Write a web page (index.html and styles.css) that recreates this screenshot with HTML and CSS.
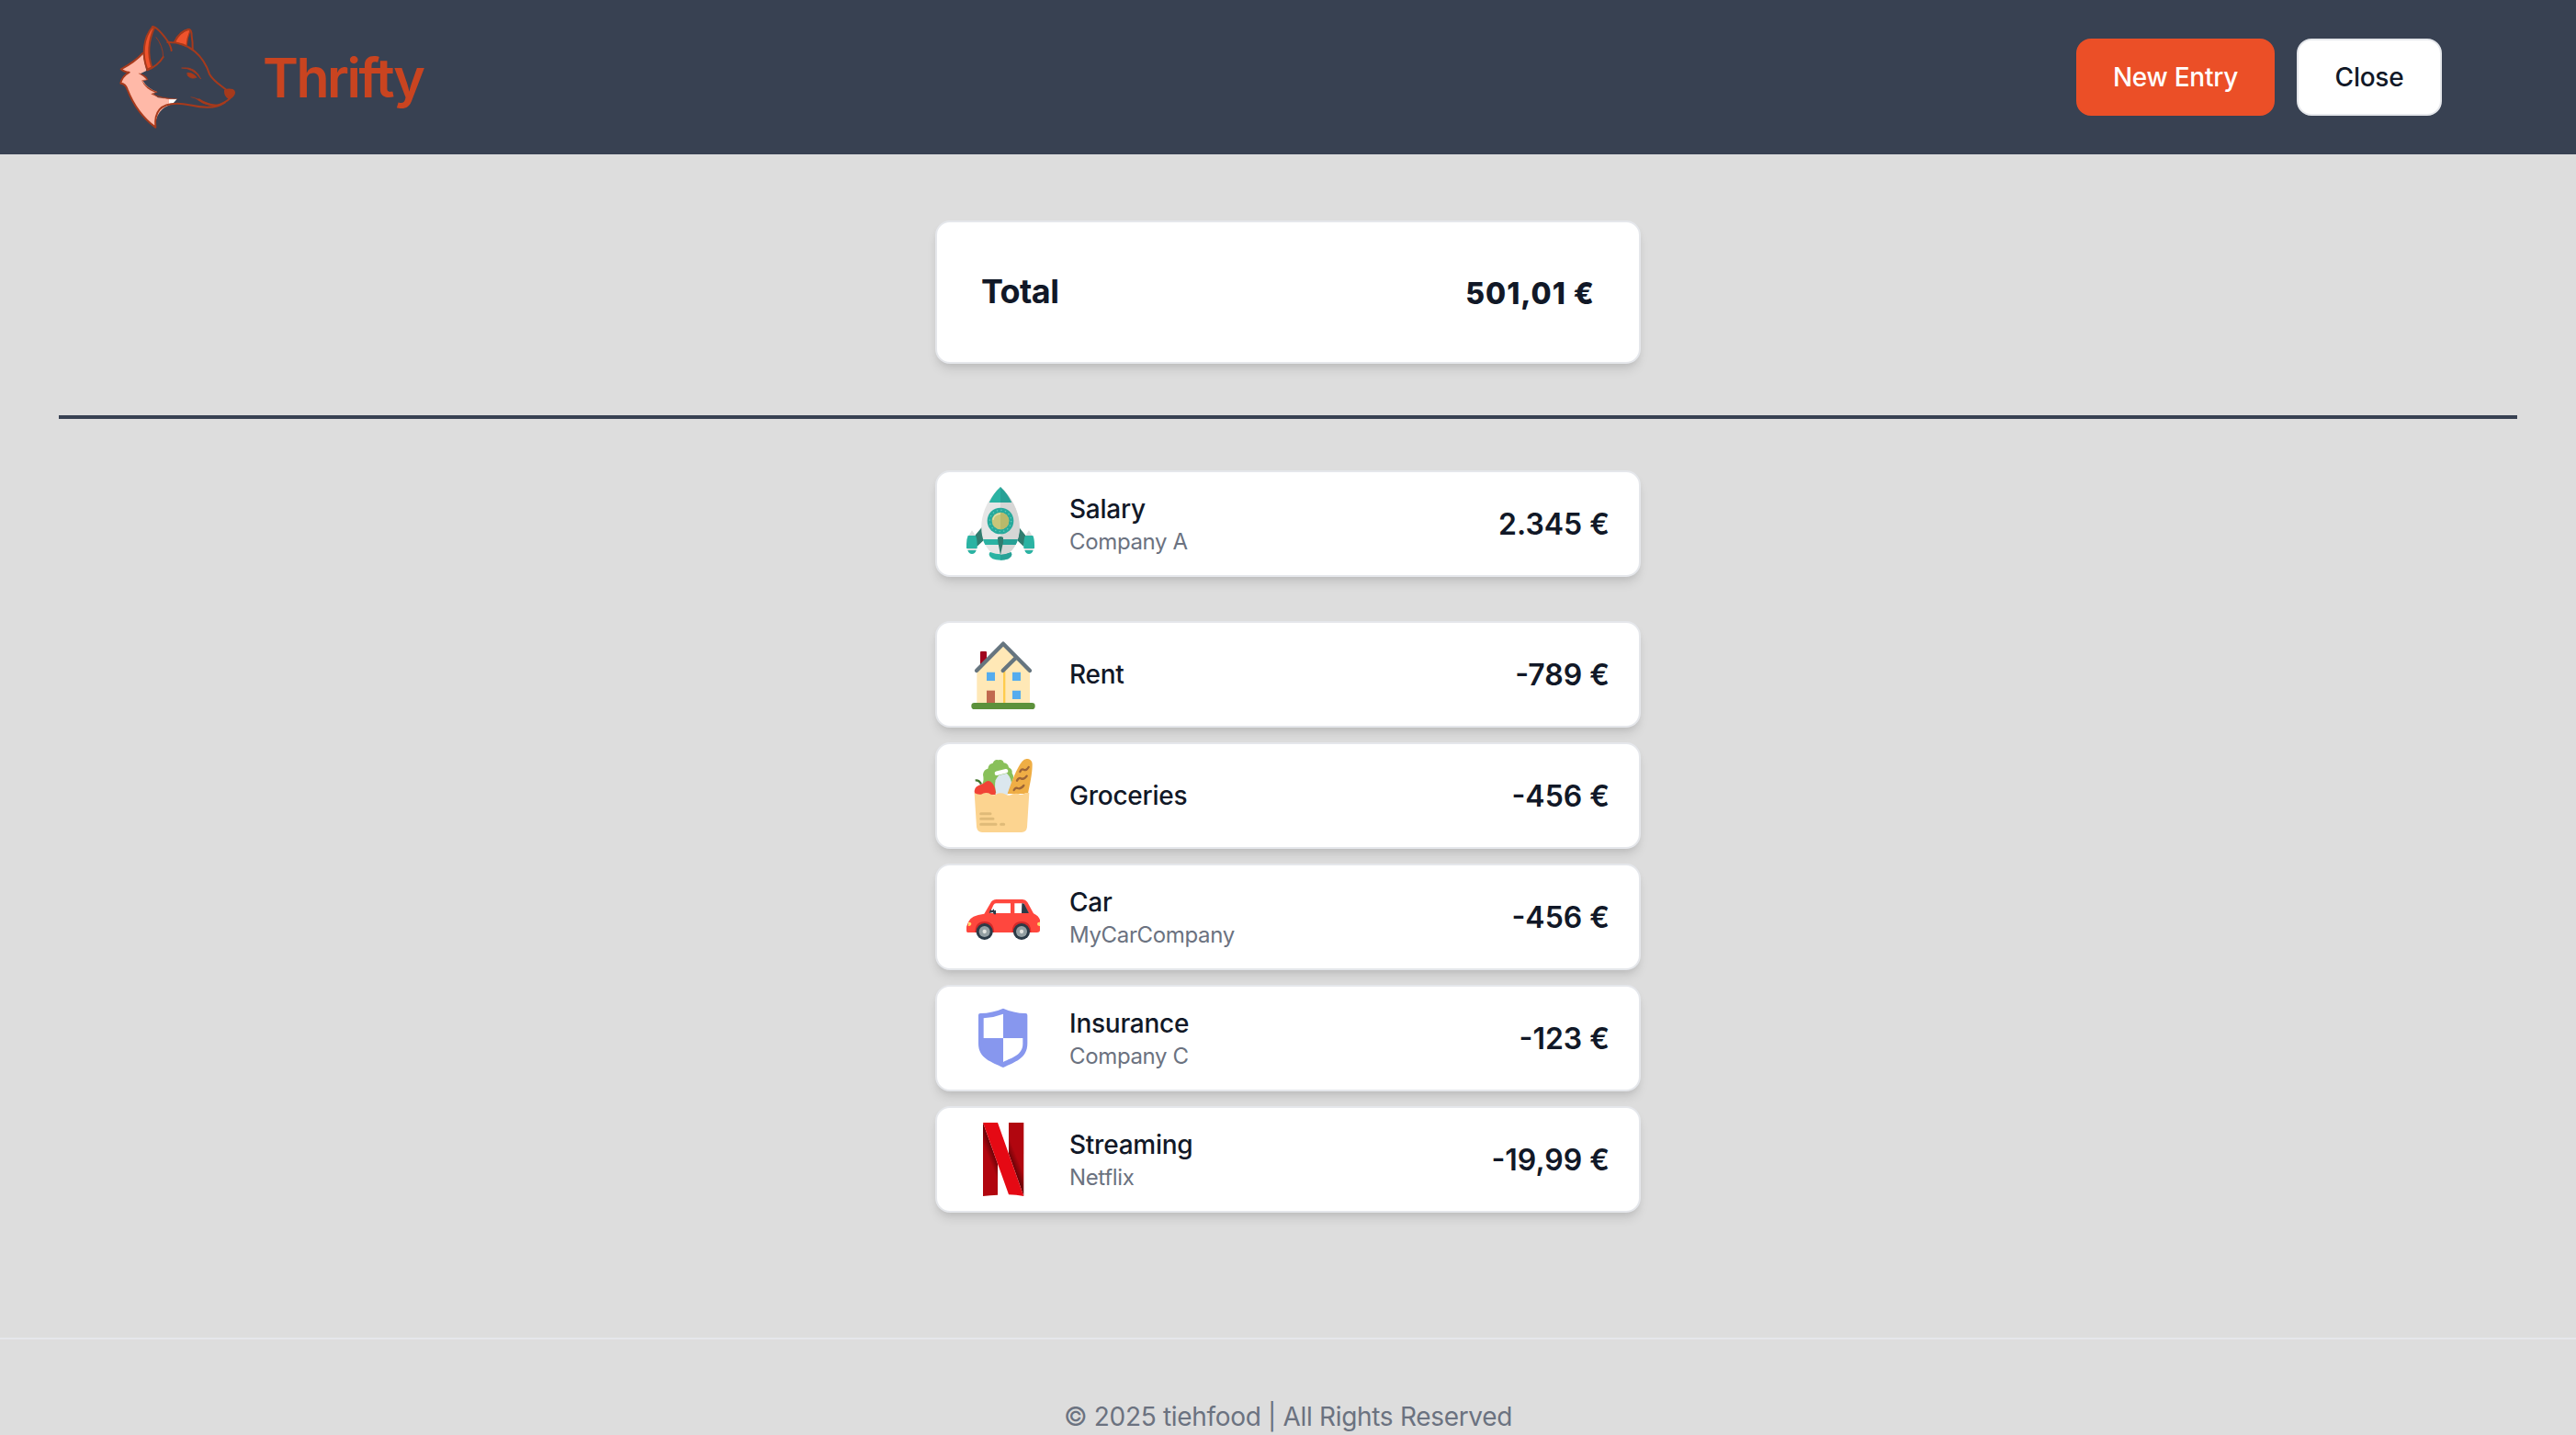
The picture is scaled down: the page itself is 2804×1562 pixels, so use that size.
FILE: index.html
```html
<!DOCTYPE html>
<html lang="en">
<head>
<meta charset="utf-8">
<title>Thrifty</title>
<link rel="stylesheet" href="styles.css">
</head>
<body>
<header class="header">
  <a class="brand">
    <svg class="brand-logo" viewBox="54 48 384 348" fill="none" stroke="#a73a1c" stroke-width="6" stroke-linecap="round" stroke-linejoin="round">
      <path d="M136 144Q112 171 65 196Q76 206 92 206Q68 220 64 242Q80 243 86 262Q116 340 178 386Q176 326 234 309L236 293L186 289L170 276L183 270Q150 258 137 234L152 230L128 211L148 201Z" fill="#ffb9a8" stroke="none"/>
      <path d="M222 294L248 293L234 309L222 310Z" fill="#fff" stroke="none"/>
      <path d="M136 144Q112 171 65 196Q76 206 92 206Q68 220 64 242Q80 243 86 262Q116 340 178 386Q170 308 246 308C285 307 300 320 345 320Q380 321 405 304"/>
      <path d="M124 210Q146 213 153 230L134 234Q148 258 184 271L168 276Q190 290 248 293Q200 296 164 277L178 272Q144 260 134 233L150 230Q140 218 124 210Z" fill="#a73a1c" stroke-width="1"/>
      <path d="M151 197C132 150 138 92 168 58L174 60C154 105 152 150 166 190Z" fill="#f0532c"/>
      <path d="M168 57Q184 58 216 102Q228 120 230 135M151 199Q186 185 203 156"/>
      <path d="M203 156Q202 118 180 92" stroke-width="2.5"/>
      <path d="M240 107Q258 75 284 66Q292 64 291 70Q281 95 279 121Z" fill="#f0532c" stroke-width="4"/>
      <path d="M240 107Q258 70 286 66Q296 66 296 88Q300 108 299 132"/>
      <path d="M217 108C290 106 336 155 354 212C366 234 390 248 410 264"/>
      <path d="M405 266Q415 260 430 264Q437 268 434 277Q428 289 418 291Q404 283 405 266Z" fill="#a73a1c"/>
      <path d="M421 291Q404 308 375 315Q340 310 320 295"/>
      <path d="M294 287C325 290 340 311 378 312Q344 318 320 299Q310 290 294 287Z" fill="#a73a1c" stroke-width="1"/>
      <path d="M264 192Q308 185 326 228Q300 192 264 192Z" fill="#a73a1c" stroke-width="2"/>
      <path d="M282 208Q300 206 312 223Q292 230 283 217Z" fill="#a73a1c" stroke-width="2"/>
    </svg>
    <span class="brand-name">Thrifty</span>
  </a>
  <nav class="actions">
    <button class="btn btn-primary">New Entry</button>
    <button class="btn btn-light">Close</button>
  </nav>
</header>

<main class="main">
  <section class="card total">
    <span class="total-label">Total</span>
    <span class="total-value">501,01 €</span>
  </section>

  <hr class="divider">

  <section class="group">
    <article class="card entry">
      <svg class="entry-icon" viewBox="126 90 240 240">
        <path d="M200 308Q200 302 208 302H266Q274 302 274 312Q270 329 237 329Q204 329 200 312Z" fill="#2bb3a3"/>
        <path d="M237 302H266Q274 302 274 312Q270 329 237 329Z" fill="#27a196"/>
        <path d="M178 220L154 248L160 285L185 262ZM296 220L319 248L313 285L289 262Z" fill="#317c6f"/>
        <path d="M237 90C160 160 160 260 206 304Q237 316 268 304C314 260 314 160 237 90Z" fill="#e6e6e6"/>
        <path d="M237 90C314 160 314 260 268 304Q253 311 237 311Z" fill="#d6d6d5"/>
        <path d="M237 90Q215 110 200 141H237ZM180 261H237V279H187Q182 271 180 261Z" fill="#2bb3a3"/>
        <path d="M237 90Q259 110 274 141H237ZM294 261H237V279H287Q292 271 294 261Z" fill="#27a196"/>
        <circle cx="237" cy="201" r="43" fill="#27aa9c"/>
        <circle cx="237" cy="201" r="35" fill="none" stroke="#63c8bd" stroke-width="4" stroke-dasharray="4 9.75"/>
        <circle cx="237" cy="201" r="28" fill="#c8c67a"/>
        <path d="M237 173A28 28 0 0 1 237 229Z" fill="#b8b96b"/>
        <path d="M213 198Q215 179 237 177" fill="none" stroke="#e0dfaa" stroke-width="4"/>
        <path d="M228 255Q237 249 246 255V270L237 313L229 270Z" fill="#317c6f"/>
        <path d="M133 250L144 232L156 250ZM318 250L330 232L341 250ZM128 290H160L154 303H134ZM314 290H346L340 303H320Z" fill="#dfdfdf"/>
        <path d="M131 249H156Q162 260 161 291H126Q125 262 131 249ZM318 249H343Q349 260 348 291H313Q312 262 318 249ZM130 297H158Q154 309 144 309Q134 309 130 297ZM316 297H344Q340 309 330 309Q320 309 316 297Z" fill="#2bb3a3"/>
      </svg>
      <div class="entry-text"><span class="entry-title">Salary</span><span class="entry-note">Company A</span></div>
      <span class="entry-amount">2.345 €</span>
    </article>
  </section>

  <section class="group">
    <article class="card entry">
      <svg class="entry-icon" viewBox="126 72 240 240">
        <rect x="171" y="117" width="21" height="45" rx="3" fill="#a0041e"/>
        <path d="M160 180L246 94L333 180V286H160Z" fill="#ffe8b6"/>
        <path d="M246 178H253V286H246Z" fill="#ffcc4d"/>
        <path d="M192 185H219V213H192ZM276 185H303V213H276ZM276 245H303V273H276Z" fill="#55acee"/>
        <path d="M192 245H219V287H192Z" fill="#c1694f"/>
        <path d="M159 180L246 92L333 180M288 137L245 180" fill="none" stroke="#66757f" stroke-width="13" stroke-linecap="round" stroke-linejoin="round"/>
        <rect x="142" y="285" width="208" height="21" rx="10" fill="#5c913b"/>
      </svg>
      <div class="entry-text"><span class="entry-title">Rent</span></div>
      <span class="entry-amount">-789 €</span>
    </article>
    <article class="card entry">
      <svg class="entry-icon" viewBox="126 78 240 240">
        <path d="M184 190L178 160Q184 148 180 130Q182 112 196 110Q198 94 212 92Q218 78 230 82Q244 78 248 91Q262 92 264 106Q277 112 275 125Q283 134 276 150L262 190Z" fill="#89c05a"/>
        <path d="M232 132L258 125Q276 144 272 165L260 195H224Q216 165 221 148Q225 138 232 132Z" fill="#dbe7ee"/>
        <path d="M225 125L255 118" stroke="#fff" stroke-width="14" stroke-linecap="round"/>
        <path d="M260 192C274 150 290 108 308 86Q318 75 330 79Q341 84 341 96C341 130 333 160 327 192Z" fill="#efae45"/>
        <path d="M301 120Q307 109 313 113Q321 118 329 105M291 149Q297 138 304 142Q314 147 323 134M281 180Q287 170 293 174Q303 178 313 165" fill="none" stroke="#9d6537" stroke-width="7" stroke-linecap="round"/>
        <path d="M155 148Q169 147 174 161" fill="none" stroke="#43752c" stroke-width="7"/>
        <path d="M153 192Q148 171 167 164Q181 161 190 152Q202 146 211 158Q223 173 221 195H153Z" fill="#f14336"/>
        <path d="M152 189Q162 196 174 194Q185 186 198 190Q210 199 222 194Q237 186 254 194Q266 201 277 193Q290 188 302 195Q314 195 318 189H331L324 301Q322 318 306 318H177Q162 318 159 301Z" fill="#fcd490"/>
        <path d="M173 257H204M173 274H213M173 292H222M239 292H248" stroke="#dfba78" stroke-width="9" stroke-linecap="round"/>
      </svg>
      <div class="entry-text"><span class="entry-title">Groceries</span></div>
      <span class="entry-amount">-456 €</span>
    </article>
    <article class="card entry">
      <svg class="entry-icon" viewBox="126 84 240 240">
        <path fill="#ff473e" fill-rule="evenodd" d="M184 194L205 158Q211 147 224 147H309Q319 147 325 156L345 193Q362 201 366 214V247Q366 255 356 255H130Q126 255 126 250V236L133 219Q140 200 184 194ZM202 192H270V160H222Q217 160 214 166ZM283 192H329L316 164Q314 160 309 160H283Z"/>
        <path d="M307 160H310Q315 160 317 166L330 192H306ZM200 192L204 180L210 184L215 178L217 184L222 182V196H216L212 189Z" fill="#2b3b47"/>
        <path d="M132 221Q142 220 142 228Q140 235 132 234ZM366 221Q357 220 357 228Q358 235 366 234Z" fill="#ffdb6e"/>
        <path d="M154 255Q154 219 185 219Q216 219 216 255ZM275 255Q275 219 306 219Q337 219 337 255Z" fill="#d32a2a"/>
        <g fill="#2b3b47"><circle cx="185" cy="252" r="27"/><circle cx="306" cy="252" r="27"/></g>
        <g fill="#94a0a3"><circle cx="185" cy="252" r="18"/><circle cx="306" cy="252" r="18"/></g>
        <g fill="#e2e4e0"><circle cx="185" cy="252" r="6.500"/><circle cx="306" cy="252" r="6.500"/></g>
      </svg>
      <div class="entry-text"><span class="entry-title">Car</span><span class="entry-note">MyCarCompany</span></div>
      <span class="entry-amount">-456 €</span>
    </article>
    <article class="card entry">
      <svg class="entry-icon" viewBox="126 75 240 240">
        <path fill="#8797ee" fill-rule="evenodd" d="M246 98Q279 113 319 114Q325 114 325 120V212C325 262 284 272 246 291C208 272 165 262 165 212V120Q165 114 171 114Q212 113 246 98ZM246 116Q215 128 182 130V195H246ZM246 195V273C276 258 310 250 310 213V195Z"/>
      </svg>
      <div class="entry-text"><span class="entry-title">Insurance</span><span class="entry-note">Company C</span></div>
      <span class="entry-amount">-123 €</span>
    </article>
    <article class="card entry">
      <svg class="entry-icon" viewBox="126 81 240 240">
        <defs>
          <linearGradient id="foldLeft" gradientUnits="userSpaceOnUse" x1="206" y1="158" x2="186" y2="166">
            <stop offset="0" stop-color="#6d0207"/><stop offset="1" stop-color="#b1060f"/>
          </linearGradient>
          <linearGradient id="foldRight" gradientUnits="userSpaceOnUse" x1="284" y1="234" x2="304" y2="226">
            <stop offset="0" stop-color="#6d0207"/><stop offset="1" stop-color="#b1060f"/>
          </linearGradient>
        </defs>
        <path d="M180 81L228 215V317Q204 318 180 321Z" fill="url(#foldLeft)"/>
        <path d="M264 81H313V321L264 183Z" fill="url(#foldRight)"/>
        <path d="M180 81H228L313 321Q289 317 264 316Z" fill="#e50914"/>
      </svg>
      <div class="entry-text"><span class="entry-title">Streaming</span><span class="entry-note">Netflix</span></div>
      <span class="entry-amount">-19,99 €</span>
    </article>
  </section>
</main>

<footer class="footer">© 2025 tiehfood | All Rights Reserved</footer>
</body>
</html>
```
FILE: styles.css
```css
* {
  box-sizing: border-box;
}

body {
  margin: 0;
  height: 1562px;
  overflow: hidden;
  background: #dddddd;
  color: #111827;
  font-family: Inter, "Liberation Sans", sans-serif;
}

.header {
  display: flex;
  align-items: center;
  justify-content: space-between;
  height: 168px;
  padding: 0 146px 0 128px;
  background: #384152;
}

.brand {
  display: flex;
  align-items: center;
  gap: 30px;
}

.brand-logo {
  width: 128px;
  height: 116px;
}

.brand-name {
  padding-top: 2px;
  color: #c94420;
  font-size: 59px;
  font-weight: 600;
  letter-spacing: -2.5px;
  line-height: 72px;
}

.actions {
  display: flex;
  gap: 24px;
}

.btn {
  height: 84px;
  padding: 0;
  border: 2px solid #e5e7eb;
  border-radius: 16px;
  font-family: inherit;
  font-size: 28px;
  font-weight: 500;
  letter-spacing: -0.25px;
  line-height: 40px;
}

.btn-primary {
  width: 216px;
  border-color: #eb4f27;
  background: #eb4f27;
  color: #fff;
}

.btn-light {
  width: 158px;
  background: #fff;
  color: #111827;
}

.main {
  display: flex;
  flex-direction: column;
  align-items: center;
  padding: 72px 64px 136px;
}

.card {
  display: flex;
  align-items: center;
  width: 768px;
  border: 2px solid #e5e7eb;
  border-radius: 16px;
  background: #fff;
  box-shadow: 0 8px 12px -2px rgb(0 0 0 / 10%), 0 4px 8px -4px rgb(0 0 0 / 10%);
}

.total {
  justify-content: space-between;
  height: 156px;
  padding: 0 48px;
}

.total-label {
  padding-bottom: 2px;
  font-size: 36px;
  font-weight: 700;
  letter-spacing: -0.6px;
}

.total-value {
  padding-top: 2px;
  font-size: 32px;
  font-weight: 800;
  letter-spacing: 1px;
}

.divider {
  align-self: stretch;
  height: 4px;
  margin: 56px 0;
  border: 0;
  background: #384152;
}

.group {
  display: flex;
  flex-direction: column;
  gap: 16px;
}

.group + .group {
  margin-top: 48px;
}

.entry {
  height: 116px;
  padding: 0 32px;
}

.entry-icon {
  width: 80px;
  height: 80px;
  margin-right: 32px;
}

.entry-text {
  display: flex;
  flex: 1;
  flex-direction: column;
}

.entry-title {
  font-size: 28px;
  font-weight: 500;
  letter-spacing: -0.25px;
  line-height: 40px;
}

.entry-note {
  color: #6b7280;
  font-size: 24px;
  letter-spacing: -0.35px;
  line-height: 32px;
}

.entry-amount {
  font-size: 32px;
  font-weight: 600;
}

.footer {
  padding-top: 64px;
  border-top: 2px solid #e5e7eb;
  color: #6b7280;
  font-size: 28px;
  letter-spacing: -0.32px;
  line-height: 40px;
  text-align: center;
}
```
